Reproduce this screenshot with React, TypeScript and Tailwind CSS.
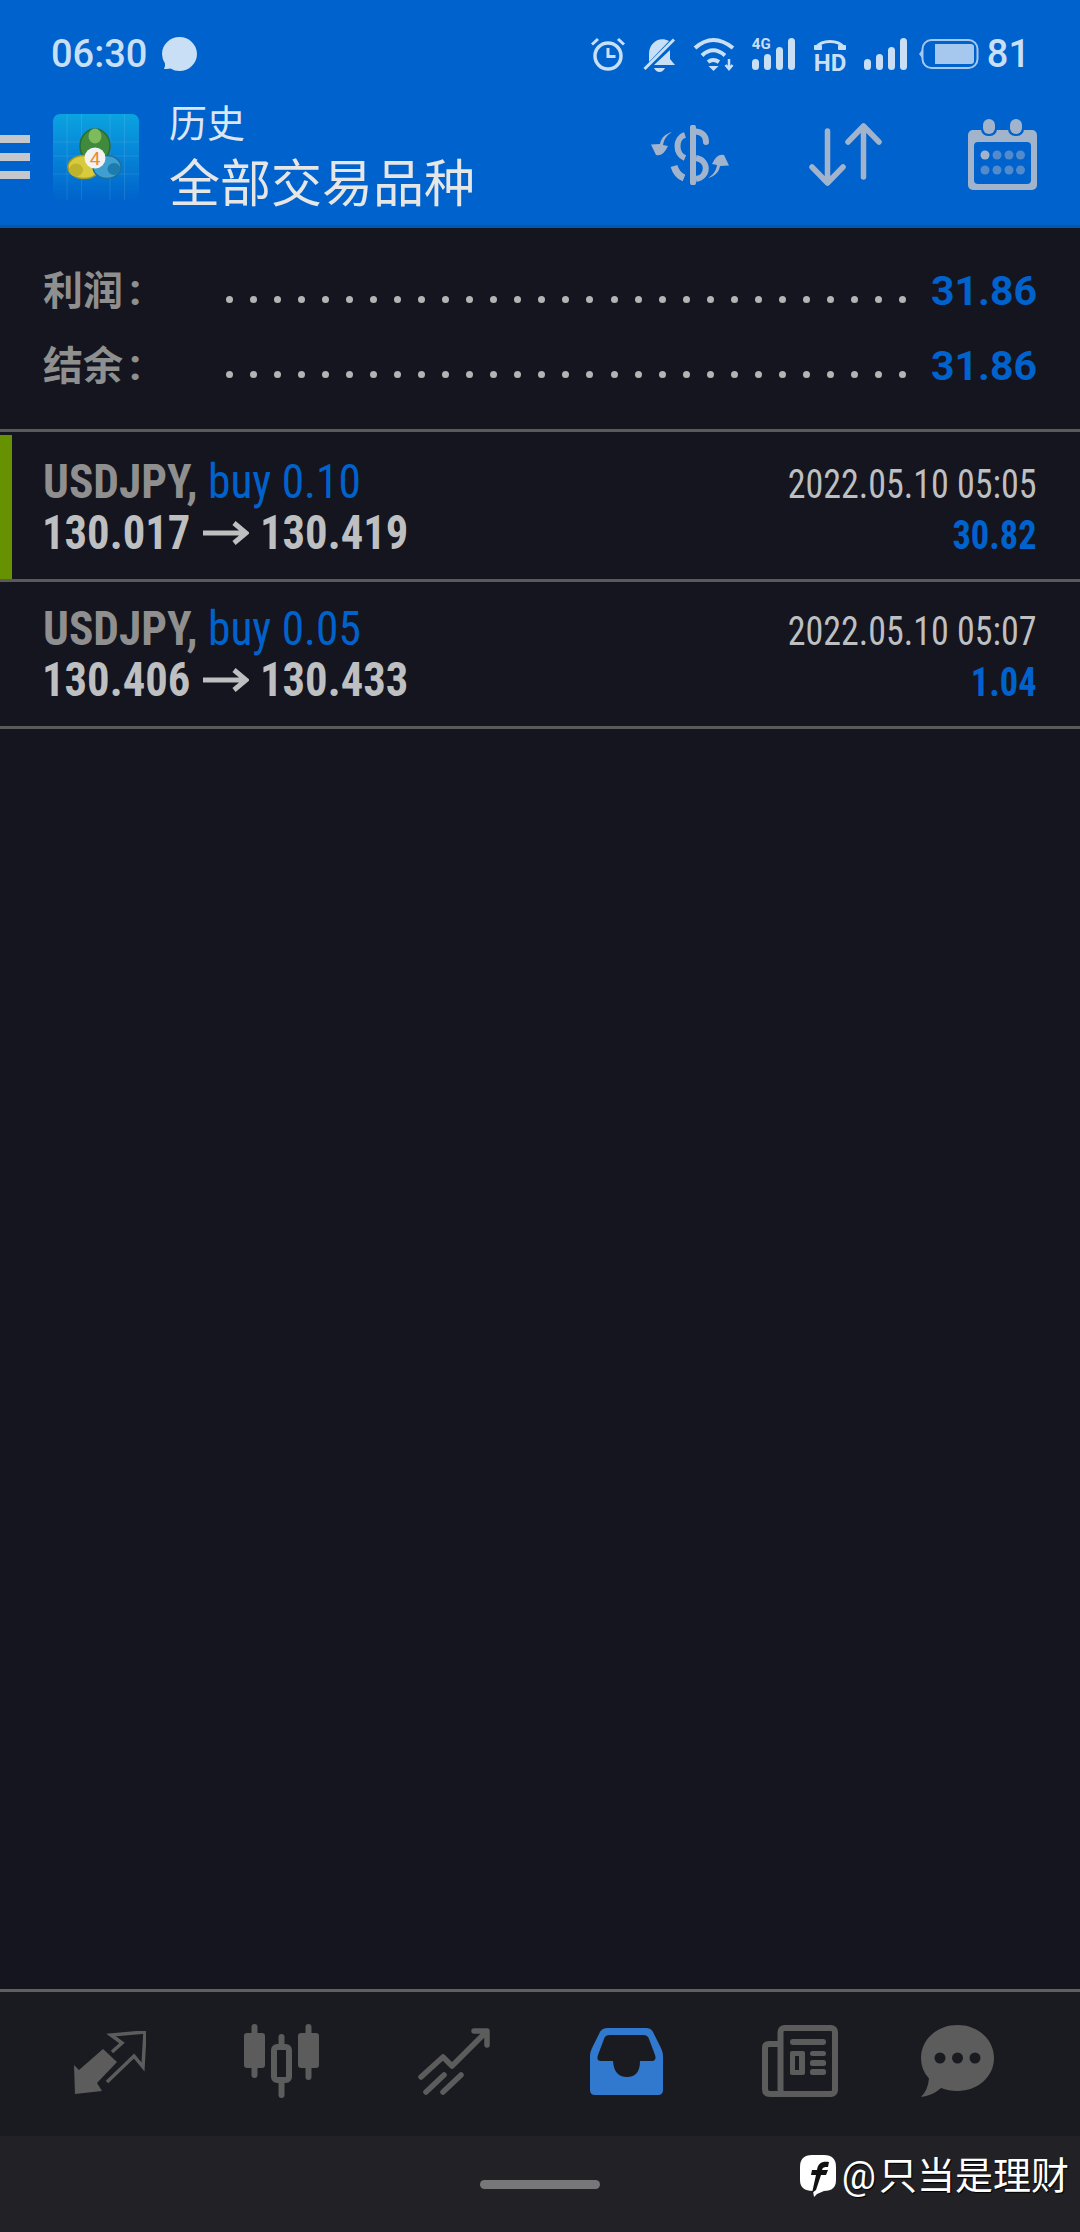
const statusColor = "#c8dff6";
const toolColor = "#a2b4cc";
const navColor = "#5c5c5c";

function Bars({ className }: { className: string }) {
  return (
    <svg viewBox="0 0 43 32" className={className} fill={statusColor}>
      <rect x="0" y="21" width="7" height="11" rx="3.5" />
      <rect x="12" y="16" width="7" height="16" rx="3.5" />
      <rect x="24" y="9" width="7" height="23" rx="3.5" />
      <rect x="36" y="0" width="7" height="32" rx="3.5" />
    </svg>
  );
}

function StatusIcons() {
  return (
    <div className="flex items-center">
      <svg viewBox="0 0 34 34" className="h-[34px] w-[34px]" fill="none" stroke={statusColor}>
        <circle cx="17" cy="19" r="13" strokeWidth="3.5" />
        <path d="M17 11v8.5h7.5" strokeWidth="3" />
        <path d="M1 7.5 7 2M33 7.5 27 2" strokeWidth="3" />
      </svg>
      <svg viewBox="0 0 33 35" className="ml-[18px] h-[35px] w-[33px]" fill={statusColor}>
        <path d="M26 4C16-1 6 6 6 17v8z" />
        <path d="M27 13v9l5 6H11z" />
        <path d="M11 31h11q-2 4-5.500 4T11 31z" />
        <path d="M1.500 32 31 2.500" stroke={statusColor} strokeWidth="3" />
      </svg>
      <svg viewBox="0 0 42 34" className="ml-[17px] h-[34px] w-[42px]" fill="none" stroke={statusColor}>
        <path d="M2 11Q20-5 40 11" strokeWidth="4" />
        <path d="M9 18.500Q20 8 32 18.500" strokeWidth="4" />
        <path d="M15 25Q20 21 26 25" strokeWidth="4" />
        <path d="M15.500 29h10l-5 5z" fill={statusColor} stroke="none" />
        <path d="M36 22v8M32.500 28l3.500 4 3.500-4" strokeWidth="2.500" />
      </svg>
      <div className="relative ml-[17px] h-[32px] w-[43px]">
        <Bars className="h-[32px] w-[43px]" />
        <span className="absolute left-0 top-[-2px] text-[15px] font-bold leading-[16px] text-[#c8dff6]">4G</span>
      </div>
      <svg viewBox="0 0 34 34" className="ml-[18px] h-[34px] w-[34px] overflow-visible" fill="none" stroke={statusColor}>
        <path d="M3.500 10C9 2.500 25 2.500 30.500 10" strokeWidth="3" />
        <path d="M1.500 8.500h7v4h-7zM25.500 8.500h7v4h-7z" fill={statusColor} strokeWidth="1" />
        <text x="17" y="33.500" textAnchor="middle" fontSize="24" fontWeight="700" fill={statusColor} stroke="none" fontFamily="Roboto">HD</text>
      </svg>
      <Bars className="ml-[17px] h-[32px] w-[43px]" />
      <svg viewBox="0 0 60 30" className="ml-[12px] h-[30px] w-[60px]">
        <rect x="3.500" y="1" width="55" height="28" rx="9" fill="none" stroke="#a6c8ee" strokeWidth="2" />
        <path d="M3 11 0 15l3 4z" fill="#a6c8ee" />
        <path d="M16 5h36q3 0 3 3v14q0 3-3 3H16z" fill="#a6c8ee" />
      </svg>
      <span className="ml-[8px] text-[38px] font-medium leading-none text-[#c8dff6]">81</span>
    </div>
  );
}

function Logo() {
  return (
    <svg viewBox="0 0 86 86" className="ml-[23px] mb-[20px] h-[86px] w-[86px]">
      <defs>
        <linearGradient id="mt-bg" x1="0" y1="0" x2="0" y2="1">
          <stop offset="0" stopColor="#0ba3e0" />
          <stop offset="1" stopColor="#0063cc" />
        </linearGradient>
      </defs>
      <rect width="86" height="86" rx="7" fill="url(#mt-bg)" />
      <path d="M14 0v86M28.500 0v86M57 0v86M71.500 0v86M0 28h86M0 42h86M0 60h86" stroke="#ffffff" strokeOpacity="0.1" />
      <ellipse cx="42" cy="32" rx="15" ry="17" fill="#3f8a3c" stroke="#2c6a34" strokeWidth="1.500" />
      <ellipse cx="42" cy="22" rx="6.500" ry="7.500" fill="#7dbb5c" />
      <ellipse cx="31" cy="53" rx="16" ry="11.500" fill="#d8cb3e" stroke="#a49a26" strokeWidth="1.500" />
      <ellipse cx="23" cy="56" rx="7" ry="6.500" fill="#c0b32c" />
      <ellipse cx="54" cy="53" rx="14" ry="11.500" fill="#3f9fcf" stroke="#1d6e9e" strokeWidth="1.500" />
      <ellipse cx="61" cy="55" rx="6.500" ry="6" fill="#1c7cad" />
      <circle cx="42" cy="44" r="10.500" fill="#f1f2f2" />
      <text x="42" y="51" textAnchor="middle" fontSize="19" fill="#f08a2c" fontFamily="Roboto">4</text>
    </svg>
  );
}

function ToolIcons() {
  return (
    <div className="mb-[24px] ml-auto mr-[43px] flex items-center">
      <svg viewBox="0 0 78 60" className="h-[60px] w-[78px]" fill="none" stroke={toolColor}>
        <path d="M42 2.500v55" strokeWidth="6" strokeLinecap="round" />
        <path d="M45 6.500C51 7 55 11 55 17" strokeWidth="6" strokeLinecap="round" />
        <path d="M34 10c-10 3-10 19 0 23" strokeWidth="6" />
        <path d="M45 33c13 2 13 19 0 21" strokeWidth="6" />
        <path d="M23 41c2 7 5 10 10 12" strokeWidth="7" />
        <path d="M21 7C14 9 10 13 9 19L0 19.500 5 30Q12 32 17 21L12 20C13 14 16 10 21 7z" fill={toolColor} stroke="none" />
        <path d="M21 7C14 9 10 13 9 19L0 19.500 5 30Q12 32 17 21L12 20C13 14 16 10 21 7z" transform="rotate(180 39 30)" fill={toolColor} stroke="none" />
      </svg>
      <svg viewBox="0 0 73 63" className="ml-[80px] h-[63px] w-[73px]" fill="none" stroke={toolColor} strokeWidth="5.500" strokeLinecap="round" strokeLinejoin="round">
        <path d="M18.500 8v52M3 44l15.500 16L34 44" />
        <path d="M54.500 3v51M39 19 54.500 3 70 19" />
      </svg>
      <svg viewBox="0 0 69 71" className="ml-[86px] h-[71px] w-[69px]">
        <rect y="11" width="69" height="60" rx="5" fill={toolColor} />
        <rect x="6" y="23" width="57" height="42" rx="4" fill="#0062cc" />
        <rect x="13" y="-1" width="16" height="18" rx="7" fill="#0062cc" />
        <rect x="40" y="-1" width="16" height="18" rx="7" fill="#0062cc" />
        <rect x="15" y="0" width="12" height="15" rx="6" fill={toolColor} />
        <rect x="42" y="0" width="12" height="15" rx="6" fill={toolColor} />
        <circle cx="17" cy="36" r="4.500" fill={toolColor} />
        <g fill={toolColor} fillOpacity="0.5">
          <circle cx="29" cy="36" r="4.500" />
          <circle cx="41" cy="36" r="4.500" />
          <circle cx="52.500" cy="36" r="4.500" />
          <circle cx="17" cy="51" r="4.500" />
          <circle cx="29" cy="51" r="4.500" />
          <circle cx="41" cy="51" r="4.500" />
          <circle cx="52.500" cy="51" r="4.500" />
        </g>
      </svg>
    </div>
  );
}

function SummaryRow({ label, value }: { label: string; value: string }) {
  return (
    <div className="flex h-[75px] items-center pl-[43px] pr-[43px]">
      <span className="w-[183px] text-[40px] font-bold leading-[56px] text-[#8f8f8f]">
        {label}
        <span className="ml-[6px] text-[44px]">:</span>
      </span>
      <div className="mt-[17px] flex w-[680px] justify-between">
        {Array.from({ length: 29 }, (_, i) => (
          <span key={i} className="h-[7px] w-[7px] rounded-full bg-[#b4b4b4]" />
        ))}
      </div>
      <span className="ml-auto mt-[2px] text-[41px] font-bold leading-none text-[#0062cc]">{value}</span>
    </div>
  );
}

function Arrow() {
  return (
    <svg viewBox="0 0 46 24" className="ml-[14px] mr-[11px] h-[24px] w-[46px]" fill="none" stroke="#bdbfc1" strokeWidth="5">
      <path d="M0 12h43M31 2l12 10-12 10" />
    </svg>
  );
}

function DealRow(props: { lots: string; open: string; close: string; time: string; profit: string; bar?: boolean }) {
  return (
    <div className="flex h-[144px]">
      <div className={props.bar ? "w-[12px] bg-[#669100]" : "w-[12px]"} />
      <div className="pl-[31px] pt-[21px] [font-stretch:75%]">
        <div className="origin-left scale-x-[.945] whitespace-nowrap text-[48px] leading-[51px]">
          <span className="font-bold text-[#8f8f8f]">USDJPY, </span>
          <span className="text-[#0062cc]">buy {props.lots}</span>
        </div>
        <div className="ml-[-1px] flex items-center text-[48px] font-bold leading-[51px] text-[#bdbfc1]">
          <span className="w-[147px] origin-left scale-x-[.93] whitespace-nowrap">{props.open}</span>
          <Arrow />
          <span className="w-[147px] origin-left scale-x-[.93] whitespace-nowrap">{props.close}</span>
        </div>
      </div>
      <div className="ml-auto pr-[43px] pt-[24px] text-right [font-stretch:75%]">
        <div className="origin-right scale-x-[.9] whitespace-nowrap text-[40px] leading-[51px] text-[#bdbfc1]">{props.time}</div>
        <div className="origin-right scale-x-[.91] text-[40px] font-bold leading-[51px] text-[#0062cc]">{props.profit}</div>
      </div>
    </div>
  );
}

function BottomNav() {
  return (
    <div className="flex h-[144px] items-center pb-[6px] pl-[74px]">
      <svg viewBox="0 0 72 64" className="mt-[3px] h-[64px] w-[72px]">
        <path d="M0 34l5 5 24-21 14 13-20 21 5 8-27 3z" fill={navColor} />
        <path d="M38 21l10-9L37 4l34-3-2 35-9-11-27 26" fill="none" stroke={navColor} strokeWidth="3.500" />
      </svg>
      <svg viewBox="0 0 75 74" className="ml-[98px] h-[74px] w-[75px]" fill={navColor}>
        <rect y="9" width="21" height="35" rx="3" />
        <rect x="7.500" width="6" height="54" rx="3" />
        <rect x="54" y="9" width="21" height="35" rx="3" />
        <rect x="61.500" width="6" height="56" rx="3" />
        <rect x="34.500" y="10" width="6" height="64" rx="3" />
        <rect x="30" y="23" width="15" height="33" rx="3" fill="#1a1b20" stroke={navColor} strokeWidth="6" />
      </svg>
      <svg viewBox="0 0 72 67" className="ml-[99px] h-[67px] w-[72px]" fill="none" stroke={navColor} strokeWidth="5.500" strokeLinecap="round" strokeLinejoin="round">
        <path d="M3 49 25 29l9 9L68 4M56 3h13v14" />
        <path d="M8 64 26 47" />
        <path d="M25 64 43 47" />
      </svg>
      <svg viewBox="0 0 73 67" className="ml-[100px] h-[67px] w-[73px]">
        <path
          fillRule="evenodd"
          fill="#3079cf"
          d="M18 0h38q5 0 7 4l7 14q3 6 3 10v34q0 5-5 5H5q-5 0-5-5V28q0-4 3-10L10 4q2-4 8-4zM20 7q-5 0-6 4L8 27q-2 6 3 6h12q1 16 14 16t13-16h11q6 0 4-6l-6-16q-1-4-6-4z"
        />
      </svg>
      <svg viewBox="0 0 76 72" className="ml-[99px] h-[72px] w-[76px]" fill="none" stroke={navColor} strokeWidth="6">
        <rect x="18.500" y="3" width="54.500" height="66" rx="4" />
        <path d="M17 19H7q-4 0-4 4v41q0 5 5 5h14" />
        <g fill={navColor} stroke="none">
          <rect x="28" y="14" width="36" height="6" rx="3" />
          <rect x="48" y="26" width="16" height="5" rx="2.500" />
          <rect x="48" y="35" width="16" height="6" rx="2.500" />
          <rect x="48" y="44" width="16" height="6" rx="2.500" />
          <path fillRule="evenodd" d="M30 26h11q2 0 2 2v20q0 2-2 2H30q-2 0-2-2V28q0-2 2-2zM33 31v14h4V31z" />
        </g>
      </svg>
      <svg viewBox="0 0 73 72" className="ml-[83px] h-[72px] w-[73px]">
        <path d="M36.500 0C57 0 73 14.500 73 33S57 66 36.500 66q-9 0-16.500-3Q11 71 0 72q7-7 8-18.500Q0 45 0 33C0 14.500 16 0 36.500 0z" fill={navColor} />
        <g fill="#1a1b20">
          <circle cx="19" cy="33" r="5.500" />
          <circle cx="36.500" cy="33" r="5.500" />
          <circle cx="54" cy="33" r="5.500" />
        </g>
      </svg>
    </div>
  );
}

function Watermark() {
  return (
    <div className="absolute bottom-[34px] right-[11px] flex items-center text-[38px] leading-[44px] text-white [text-shadow:1px_1px_1px_#000]">
      <svg viewBox="0 0 36 42" className="mr-[6px] h-[42px] w-[36px]">
        <path d="M12 0h12q12 0 12 12v13q0 11-12 11l-7 3-3 3-1-6Q0 36 0 25V12Q0 0 12 0z" fill="#ffffff" />
        <path d="M12 38l4-18h-5l1-5h5c1-7 5-9 12-8l-1 5c-4 0-5 0-6 3h6l-2 5h-5l-5 15z" fill="#111111" />
      </svg>
      <span>
        <span className="mr-[3px]">@</span>只当是理财
      </span>
    </div>
  );
}

export default function App() {
  return (
    <div className="relative flex h-[2232px] w-[1080px] flex-col overflow-hidden bg-[#14151e] font-['Roboto','Noto_Sans_CJK_SC',sans-serif]">
      <header className="h-[228px] border-b-[3px] border-[#0358ad] bg-[#0062cc]">
        <div className="flex h-[108px] items-center justify-between pl-[51px] pr-[50px]">
          <div className="flex items-center">
            <span className="text-[38px] font-medium leading-none text-[#c8dff6]">06:30</span>
            <svg viewBox="0 0 35 34" className="ml-[15px] h-[34px] w-[35px]" fill={statusColor}>
              <path d="M17.500 0C27 0 35 7.500 35 17s-8 17-17.500 17q-5 0-9-2.500Q4 32 2 32q1.500-2.500 1-5.500Q0 22 0 17C0 7.500 8 0 17.500 0z" />
            </svg>
          </div>
          <StatusIcons />
        </div>
        <div className="flex h-[117px] items-center">
          <div className="mb-[20px] flex w-[30px] flex-col gap-[10px]">
            <div className="h-[8px] bg-[#c4c8cc]" />
            <div className="h-[8px] bg-[#c4c8cc]" />
            <div className="h-[8px] bg-[#c4c8cc]" />
          </div>
          <Logo />
          <div className="mb-[20px] ml-[30px] flex flex-col">
            <span className="text-[38px] leading-[52px] text-[#dce6f2]">历史</span>
            <span className="mt-[4px] text-[51px] leading-[62px] text-[#e6e6e6]">全部交易品种</span>
          </div>
          <ToolIcons />
        </div>
      </header>

      <main className="flex-1">
        <section className="h-[201px] pt-[25px]">
          <SummaryRow label="利润" value="31.86" />
          <SummaryRow label="结余" value="31.86" />
        </section>
        <div className="border-y-[3px] border-[#5a5a5a] pt-[3px]">
          <DealRow bar lots="0.10" open="130.017" close="130.419" time="2022.05.10 05:05" profit="30.82" />
        </div>
        <div className="border-b-[3px] border-[#5a5a5a]">
          <DealRow lots="0.05" open="130.406" close="130.433" time="2022.05.10 05:07" profit="1.04" />
        </div>
      </main>

      <nav className="h-[147px] border-t-[3px] border-[#5f6060] bg-[#1a1b20]">
        <BottomNav />
      </nav>
      <div className="flex h-[96px] justify-center bg-[#212126] pt-[44px]">
        <div className="h-[9px] w-[120px] rounded-full bg-[#77777a]" />
      </div>
      <Watermark />
    </div>
  );
}
